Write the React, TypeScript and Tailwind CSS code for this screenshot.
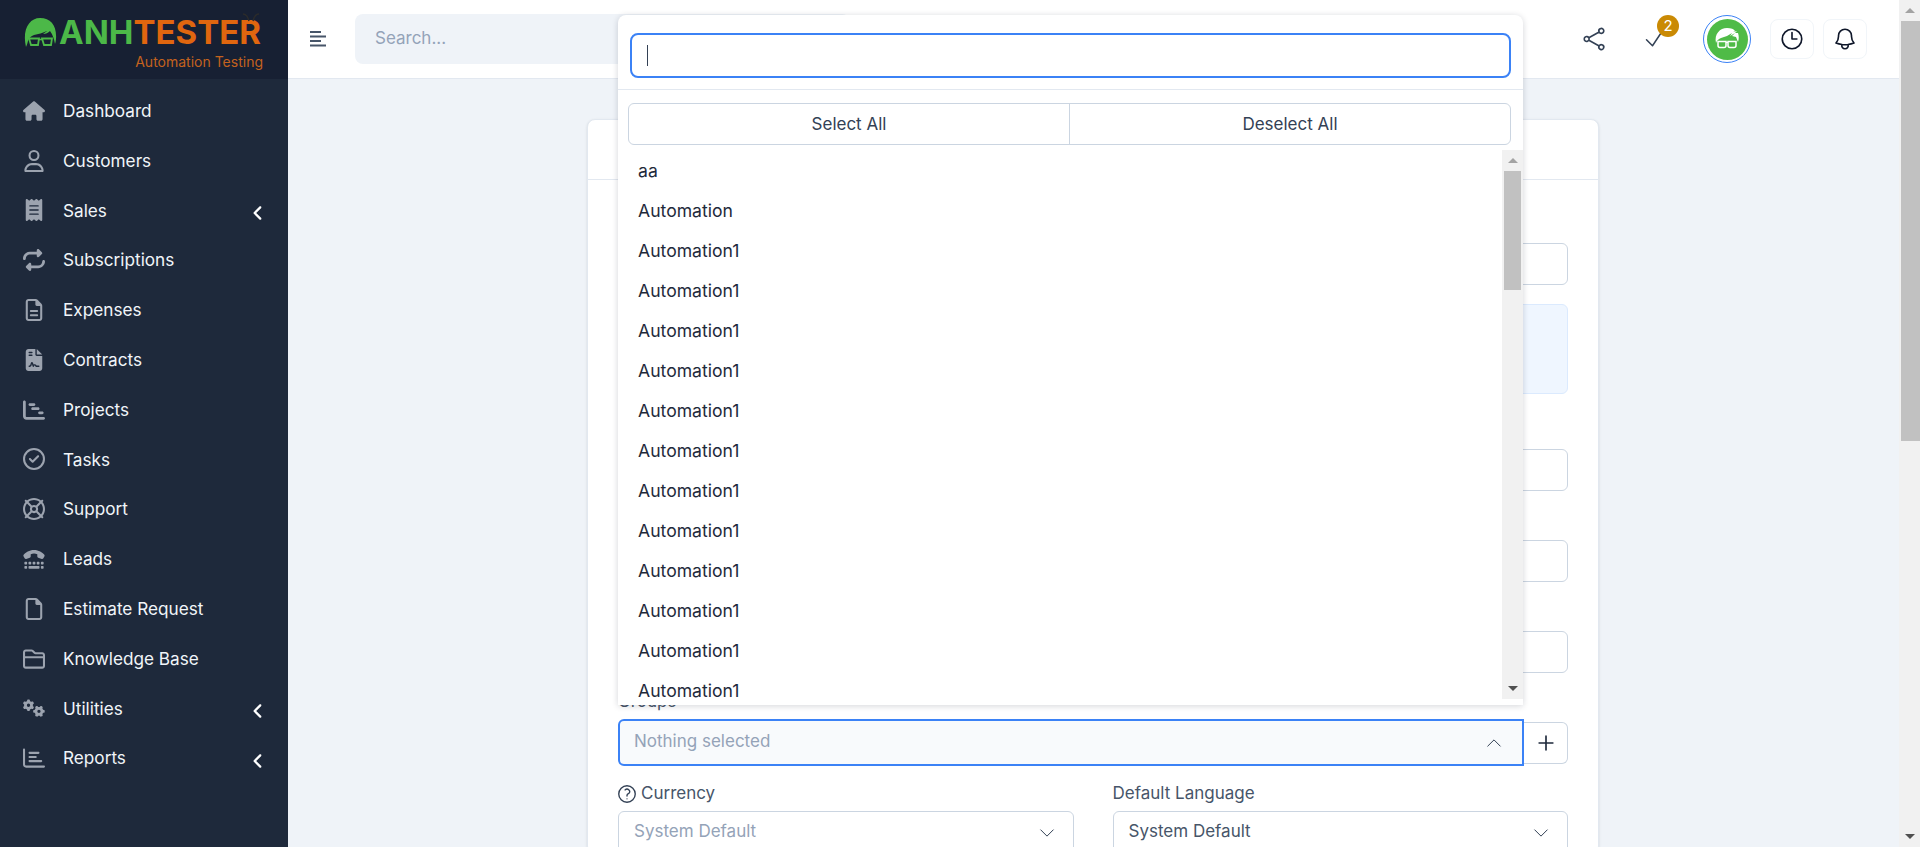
import {
  FaAngleLeft,
  FaChartGantt,
  FaFileContract,
  FaGears,
  FaHouse,
  FaReceipt,
  FaRepeat,
  FaTty,
  FaRegChartBar,
  FaRegCircleCheck,
  FaRegFile,
  FaRegFileLines,
  FaRegFolderClosed,
  FaRegLifeRing,
  FaRegUser,
} from "react-icons/fa6";
import { HiOutlineBell, HiOutlineClock, HiOutlineQuestionMarkCircle, HiOutlineShare } from "react-icons/hi2";
import { HiOutlineCheck, HiOutlineChevronDown, HiOutlineChevronUp, HiOutlinePlus } from "react-icons/hi2";
import type { ComponentType, ReactNode } from "react";

type NavItem = { label: string; icon: ComponentType<{ className?: string }>; sub?: boolean };

const navItems: NavItem[] = [
  { label: "Dashboard", icon: FaHouse },
  { label: "Customers", icon: FaRegUser },
  { label: "Sales", icon: FaReceipt, sub: true },
  { label: "Subscriptions", icon: FaRepeat },
  { label: "Expenses", icon: FaRegFileLines },
  { label: "Contracts", icon: FaFileContract },
  { label: "Projects", icon: FaChartGantt },
  { label: "Tasks", icon: FaRegCircleCheck },
  { label: "Support", icon: FaRegLifeRing },
  { label: "Leads", icon: FaTty },
  { label: "Estimate Request", icon: FaRegFile },
  { label: "Knowledge Base", icon: FaRegFolderClosed },
  { label: "Utilities", icon: FaGears, sub: true },
  { label: "Reports", icon: FaRegChartBar, sub: true },
];

const options = ["aa", "Automation", ...Array(12).fill("Automation1")];

function HeadMark() {
  return (
    <svg viewBox="0 0 33 31" className="h-[31px] w-[33px] shrink-0">
      <path
        d="M2 30C-2 13 5 1 16 1c11 0 17 8 16 21-.2 2-.6 4-1 5-1-5-2-9-5-13-2 2-4 3-7 3l4-3c-4 2-9 3-13 4-3 1-5 3-6 6-.5 2-1 4-2 6z"
        fill="#4cb848"
      />
      <path d="M5 21.5h10l-1 6.5H7zM18 21.5h10l-1 6.5h-7z" fill="none" stroke="#4cb848" strokeWidth="1.8" />
      <path d="M15 22.5h3" stroke="#4cb848" strokeWidth="1.5" />
    </svg>
  );
}

function Sidebar() {
  return (
    <aside className="flex w-[288px] shrink-0 flex-col bg-[#1e293b]">
      <div className="relative flex h-[79px] shrink-0 flex-col bg-[#172033] pl-[24px] pr-[25px] pt-[16px]">
        <div className="flex items-center gap-[2px]">
          <HeadMark />
          <span className="text-[33px] font-bold leading-[32px] text-[#4cb848]">
            ANH<span className="text-[#e0660f]">TESTER</span>
          </span>
        </div>
        <svg viewBox="0 0 20 10" className="absolute left-[241px] top-[13px] h-[10px] w-[20px]">
          <path d="M2 1c3 0 5 3 6 7M18 1c-3 0-5 3-6 7" fill="none" stroke="#2b2b2b" strokeWidth="1.4" />
        </svg>
        <div className="mt-[4px] text-right text-[14px] leading-[20px] text-[#c4621e]">Automation Testing</div>
      </div>
      <nav className="flex flex-col pt-[7px]">
        {navItems.map((item) => (
          <div key={item.label} className="flex h-[49.8px] items-center pl-[23px] pr-[21px]">
            <span className="flex w-[40px] shrink-0">
              <item.icon className="h-[22px] w-auto text-[#9ca3af]" />
            </span>
            <span className="flex-1 text-[17.2px] text-[#f1f5f9]">{item.label}</span>
            {item.sub && <FaAngleLeft className="mt-[6px] text-[18px] text-white" />}
          </div>
        ))}
      </nav>
    </aside>
  );
}

function Topbar() {
  return (
    <header className="flex h-[79px] shrink-0 items-center border-b border-[#e2e8f0] bg-white pl-[22px] pr-[32px]">
      <svg viewBox="0 0 16 16" className="h-[16px] w-[16px]" fill="none" stroke="#475569" strokeWidth="1.8">
        <path d="M0 1h11M0 5.5h16M0 10h11M0 14.5h16" />
      </svg>
      <div className="mb-[1px] ml-[29px] flex h-[50px] w-[495px] items-center rounded-lg bg-[#eff3f8] px-[20px] text-[17px] text-[#94a3b8]">
        Search...
      </div>
      <div className="ml-auto flex items-center">
        <HiOutlineShare className="mr-[35px] text-[26px] text-[#334155]" />
        <div className="relative mr-[37px]">
          <HiOutlineCheck className="text-[24px] text-[#334155]" />
          <span className="absolute -right-[13px] -top-[12px] flex h-[22px] w-[22px] items-center justify-center rounded-full bg-[#ca8a04] text-[15px] text-white">
            2
          </span>
        </div>
        <div className="mr-[19px] flex h-[48px] w-[48px] items-center justify-center rounded-full border border-[#3b82f6]">
          <div className="flex h-[41px] w-[41px] items-center justify-center rounded-full bg-[#4fbb47]">
            <svg viewBox="0 0 34 34" className="h-[34px] w-[34px]">
              <path d="M6 21C4 12 10 6 17 6c4 0 7 1 8 3l-2 1 4-1-2 2 3 0c1 3 1 6 0 9l-2-5-4-1 3-3-5 3 2-3-5 3-6 2c-2 1-4 2-5 5z" fill="#fff" />
              <path d="M8 19.500h8v4a2 2 0 0 1-2 2h-4a2 2 0 0 1-2-2zM18 19.500h8v4a2 2 0 0 1-2 2h-4a2 2 0 0 1-2-2z" fill="none" stroke="#fff" strokeWidth="1.5" />
              <path d="M16 20.500h2" stroke="#fff" strokeWidth="1.2" />
            </svg>
          </div>
        </div>
        <button className="mr-[9px] flex h-[40px] w-[44px] items-center justify-center rounded-lg border border-[#f1f5f9]">
          <HiOutlineClock className="text-[26px] text-[#0f172a]" />
        </button>
        <button className="flex h-[40px] w-[44px] items-center justify-center rounded-lg border border-[#f1f5f9]">
          <HiOutlineBell className="text-[26px] text-[#0f172a]" />
        </button>
      </div>
    </header>
  );
}

// labels of the upper fields sit behind the open dropdown, so they only keep their height
function Field({ label, children }: { label?: ReactNode; children: ReactNode }) {
  return (
    <div className="flex flex-col">
      <label className="mb-[5px] flex h-[24px] items-center gap-[3px] text-[17px] text-[#475569]">{label}</label>
      {children}
    </div>
  );
}

function TextBox() {
  return <div className="h-[42px] rounded-md border border-[#cbd5e1] bg-white" />;
}

function SelectBox({ text, muted }: { text: string; muted?: boolean }) {
  return (
    <div className="flex h-[42px] items-center justify-between rounded-md border border-[#cbd5e1] bg-white pl-[15px] pr-[16px]">
      <span className={muted ? "text-[17px] text-[#94a3b8]" : "text-[17px] text-[#475569]"}>{text}</span>
      <HiOutlineChevronDown className="mt-[2px] text-[20px] text-[#334155]" strokeWidth={1.2} />
    </div>
  );
}

function CustomerForm() {
  return (
    <div className="ml-[299px] mt-[40px] w-[1012px] rounded-lg border border-[#e2e8f0] bg-white shadow-sm">
      <div className="h-[60px] border-b border-[#e2e8f0]" />
      <div className="flex flex-col px-[30px] pt-[34px]">
        <Field>
          <TextBox />
        </Field>
        <div className="mt-[19px] h-[90px] rounded-md border border-[#dbeafe] bg-[#eff6ff]" />
        <div className="mt-[26px]">
          <Field>
            <TextBox />
          </Field>
        </div>
        <div className="mt-[20px]">
          <Field>
            <TextBox />
          </Field>
        </div>
        <div className="mt-[20px]">
          <Field>
            <TextBox />
          </Field>
        </div>
        <div className="mt-[17px] flex flex-col">
          <label className="flex h-[24px] items-center text-[17px] text-[#475569]">Groups</label>
          <div className="mt-[5px] flex items-center">
            <div className="z-10 flex h-[47px] flex-1 items-center justify-between rounded-l-md border-[2px] border-[#3b82f6] bg-[#f8fafc] pb-[1px] pl-[14px] pr-[18px]">
              <span className="text-[17px] text-[#94a3b8]">Nothing selected</span>
              <HiOutlineChevronUp className="mt-[2px] text-[20px] text-[#334155]" strokeWidth={1.2} />
            </div>
            <div className="flex h-[42px] w-[44px] items-center justify-center rounded-r-md border border-l-0 border-[#cbd5e1] bg-white">
              <HiOutlinePlus className="text-[22px] text-[#1e293b]" strokeWidth={1.8} />
            </div>
          </div>
        </div>
        <div className="mt-[16px] grid grid-cols-2 gap-[39px]">
          <Field
            label={
              <>
                <HiOutlineQuestionMarkCircle className="-ml-[2px] text-[22px] text-[#334155]" />
                Currency
              </>
            }
          >
            <SelectBox text="System Default" muted />
          </Field>
          <Field label="Default Language">
            <SelectBox text="System Default" />
          </Field>
        </div>
      </div>
    </div>
  );
}

function GroupsDropdown() {
  return (
    <div className="absolute left-[618px] top-[15px] z-20 flex h-[690px] w-[905px] flex-col rounded-t-lg bg-white shadow-[0_1px_6px_rgba(15,23,42,0.18)]">
      <div className="border-b border-[#e2e8f0] px-[12px] pb-[11px] pt-[18px]">
        <div className="flex h-[45px] items-center rounded-lg border-[2px] border-[#3b82f6] bg-white pl-[15px]">
          <span className="h-[21px] w-[1px] bg-[#334155]" />
        </div>
      </div>
      <div className="mx-[10px] mt-[13px] flex h-[42px] w-[883px] shrink-0 rounded-md border border-[#cbd5e1] text-[17px] text-[#334155]">
        <button className="flex-1 border-r border-[#cbd5e1] pt-[1px]">Select All</button>
        <button className="flex-1 pt-[1px]">Deselect All</button>
      </div>
      <div className="mt-[5px] flex min-h-0 flex-1 overflow-hidden">
        <div className="flex-1 overflow-hidden pt-[1px]">
          {options.map((name, i) => (
            <div key={i} className="flex h-[40px] items-center pl-[20px] text-[17.6px] text-[#1e293b]">
              {name}
            </div>
          ))}
        </div>
        <Scrollbar className="mb-[6px] w-[21px]" thumb="h-[119px] w-[17px]" />
      </div>
    </div>
  );
}

function Scrollbar({ className, thumb }: { className: string; thumb: string }) {
  return (
    <div className={"flex shrink-0 flex-col items-center bg-[#f1f1f1] " + className}>
      <div className="flex h-[21px] w-full shrink-0 items-center justify-center">
        <div className="h-0 w-0 border-x-[5px] border-b-[5px] border-x-transparent border-b-[#a3a3a3]" />
      </div>
      <div className={"shrink-0 bg-[#c1c1c1] " + thumb} />
      <div className="flex-1" />
      <div className="flex h-[21px] w-full shrink-0 items-center justify-center">
        <div className="h-0 w-0 border-x-[5px] border-t-[5px] border-x-transparent border-t-[#505050]" />
      </div>
    </div>
  );
}

export default function App() {
  return (
    <div className="relative flex h-[847px] w-[1920px] overflow-hidden bg-[#eff3f8] font-['Inter',sans-serif]">
      <Sidebar />
      <main className="flex min-w-0 flex-1 flex-col overflow-hidden">
        <Topbar />
        <CustomerForm />
      </main>
      <Scrollbar className="w-[21px]" thumb="h-[420px] w-[19px] self-end" />
      <GroupsDropdown />
    </div>
  );
}
